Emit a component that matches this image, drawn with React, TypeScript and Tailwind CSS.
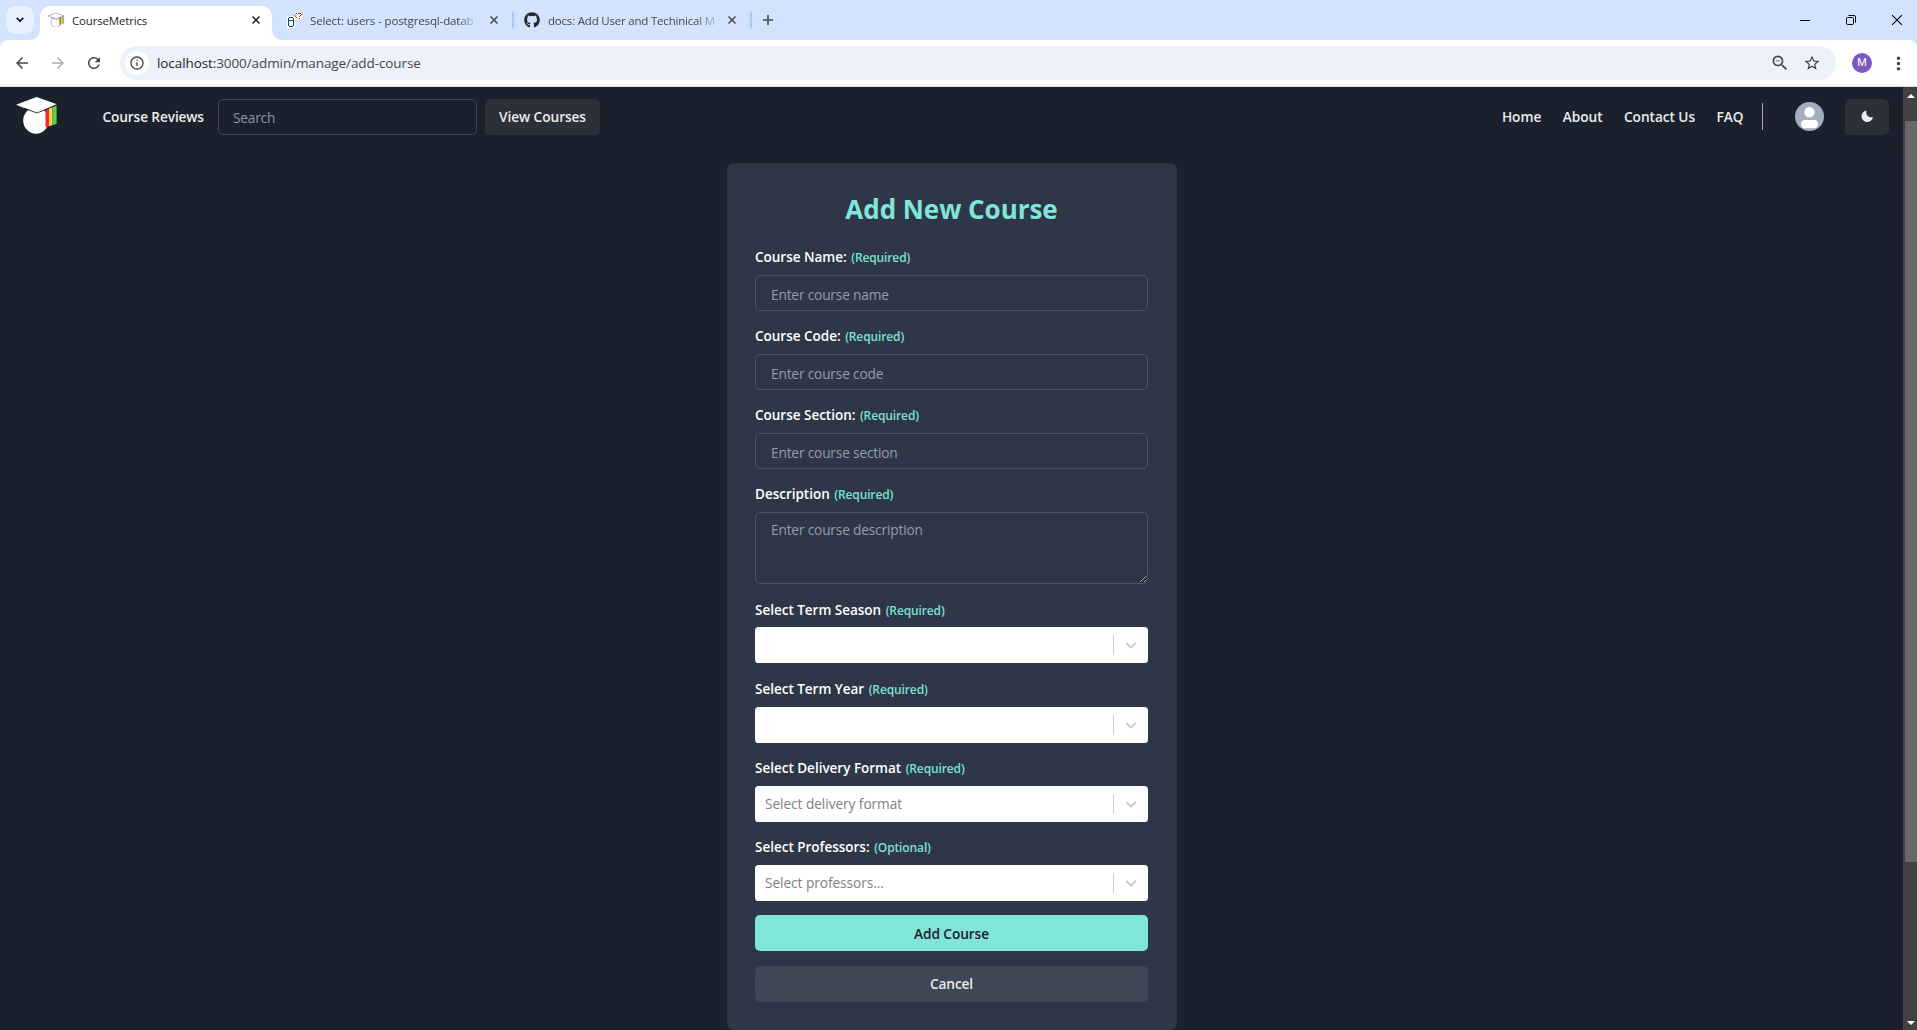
import type { ReactNode } from "react";
import {
  MdArrowBack,
  MdArrowForward,
  MdInfoOutline,
  MdMoreVert,
  MdRefresh,
  MdStarBorder,
  MdZoomOut,
} from "react-icons/md";
import { FaGithub } from "react-icons/fa";

function CapLogo({ className, outline }: { className: string; outline?: boolean }) {
  const line = outline ? "#8a8a8a" : "#1a202c";
  return (
    <svg viewBox="0 0 41 37" className={className}>
      <ellipse cx="20" cy="23.5" rx="12.8" ry="13.2" fill="#fff" stroke={outline ? line : "none"} strokeWidth="1.6" />
      <path d="M29.5 12.5 33 11.5V29.5L29.5 30.5z" fill="#f02b2b" />
      <path d="M33 11 36.3 10V28.2L33 29.3z" fill="#f9d44c" />
      <path d="M36.3 10 40.6 8.8V27L36.3 28.2z" fill="#5fcf4f" />
      <path d="M0 7.8 20.5 0 41 7.2 21 16z" fill="#fff" stroke={outline ? line : "none"} strokeWidth="1.6" />
      <path d="M8 11.2 21 16 41 7.6" fill="none" stroke={line} strokeWidth={outline ? 1.6 : 0.9} />
    </svg>
  );
}

function DatabaseIcon() {
  return (
    <svg viewBox="0 0 16 16" className="size-4 shrink-0" shapeRendering="crispEdges">
      <path d="M0 4h8v12H0zM7 1h8v6H7z" fill="#fff" />
      <path d="M2 5h4v1H2zM1 6h1v8H1zM6 6h1v8H6zM2 8h4v1H2zM2 14h4v1H2z" fill="#0f4c63" />
      <path
        d="M9 1h1v1H9zM8 2h1v1H8zM7 3h1v1H7zM8 4h1v1H8zM9 5h1v1H9zM11 1h3v1h-3zM14 2h1v1h-1zM13 3h1v1h-1zM12 4h1v1h-1zM12 6h1v1h-1z"
        fill="#e11d1d"
      />
    </svg>
  );
}

function CloseGlyph({ className }: { className: string }) {
  return (
    <svg viewBox="0 0 8 8" className={`size-2 shrink-0 ${className}`}>
      <path d="M.5.5l7 7M7.5.5l-7 7" stroke="currentColor" strokeWidth="1.5" fill="none" />
    </svg>
  );
}

function TabStrip() {
  return (
    <div className="flex h-10 items-center bg-[#d3e3fd]">
      <div className="ml-1.5 flex size-7 items-center justify-center rounded-[10px] bg-[#e9f0fd]">
        <svg viewBox="0 0 8 6" className="h-1.5 w-2">
          <path d="M.7.8 4 4.2 7.3.8" fill="none" stroke="#1f1f1f" strokeWidth="1.7" />
        </svg>
      </div>
      <div className="relative ml-1.5 flex h-[34px] w-[232px] items-center self-end rounded-t-[10px] bg-white pb-1.5 text-[#1f1f1f]">
        <svg viewBox="0 0 10 10" className="absolute -left-2.5 bottom-0 size-2.5">
          <path d="M10 0v10H0A10 10 0 0 0 10 0z" fill="#fff" />
        </svg>
        <svg viewBox="0 0 10 10" className="absolute -right-2.5 bottom-0 size-2.5">
          <path d="M0 0v10h10A10 10 0 0 1 0 0z" fill="#fff" />
        </svg>
        <CapLogo className="ml-2 h-[14.5px] w-4" outline />
        <span className="ml-2 flex-1 pt-0.5 text-[11.5px] tracking-[-0.18px]">CourseMetrics</span>
        <CloseGlyph className="mr-3" />
      </div>
      <div className="ml-[15px] flex items-center text-[#43474e]">
        <DatabaseIcon />
        <span className="ml-[7px] w-[168px] pt-0.5 text-[11.5px] tracking-[-0.13px] whitespace-nowrap [mask-image:linear-gradient(to_right,#000_148px,transparent_168px)]">
          Select: users - postgresql-datab
        </span>
        <CloseGlyph className="ml-3" />
      </div>
      <div className="ml-3.5 h-4 w-0.5 rounded-full bg-[#a8c7fa]" />
      <div className="ml-2.5 flex items-center text-[#43474e]">
        <FaGithub className="size-4 text-[#24292f]" />
        <span className="ml-2 w-[168px] pt-0.5 text-[11.5px] tracking-[-0.2px] whitespace-nowrap [mask-image:linear-gradient(to_right,#000_148px,transparent_172px)]">
          docs: Add User and Techinical M
        </span>
        <CloseGlyph className="ml-3" />
      </div>
      <div className="ml-3.5 h-4 w-0.5 rounded-full bg-[#a8c7fa]" />
      <svg viewBox="0 0 10 10" className="ml-[11px] size-2.5">
        <path d="M5 0v10M0 5h10" stroke="#43474e" strokeWidth="1.6" />
      </svg>
      <div className="mr-[15px] ml-auto flex items-center gap-9 text-black">
        <svg viewBox="0 0 10 10" className="size-2.5">
          <path d="M0 5.5h10" stroke="currentColor" />
        </svg>
        <svg viewBox="0 0 10 10" className="size-2.5" fill="none" stroke="currentColor">
          <rect x=".5" y="2.5" width="7" height="7" rx="1.2" />
          <path d="M2.5.5H8A1.5 1.5 0 0 1 9.500 2v5.500" />
        </svg>
        <svg viewBox="0 0 10 10" className="size-2.5">
          <path d="M0 0l10 10M10 0L0 10" stroke="currentColor" strokeWidth="1.1" />
        </svg>
      </div>
    </div>
  );
}

function Toolbar() {
  return (
    <div className="bg-[#d3e3fd]">
      <div className="flex h-[47px] items-center rounded-t-lg border-b border-[#dcdfe4] bg-white text-[#474747]">
        <MdArrowBack className="ml-[13px] size-[18px]" />
        <MdArrowForward className="ml-[18px] size-[18px] text-[#aaacae]" />
        <MdRefresh className="ml-[18px] size-[18px]" />
        <div className="ml-[17px] flex h-[34px] w-[1716px] items-center rounded-full bg-[#ecf1fa]">
          <div className="ml-[5px] flex size-6 items-center justify-center rounded-full bg-white">
            <MdInfoOutline className="size-4" />
          </div>
          <div className="ml-2 flex-1 text-[13.5px] tracking-[-0.09px] text-[#474747]">
            <span className="text-[#1f1f1f]">localhost:</span>3000/admin/manage/add-course
          </div>
          <MdZoomOut className="size-5" />
          <MdStarBorder className="mr-[15px] ml-[13px] size-[18px]" />
        </div>
        <div className="ml-4 flex size-5 items-center justify-center rounded-full bg-[#7e57c2] pt-px font-[Roboto] text-[11px] text-white">
          M
        </div>
        <MdMoreVert className="ml-[15.5px] size-[21px]" />
      </div>
    </div>
  );
}

function NavBar() {
  return (
    <header className="flex h-[60px] items-center border-b border-[#171923] text-[13.7px] font-semibold tracking-[-0.13px] text-[#ebecec]">
      <CapLogo className="-mt-0.5 ml-4 h-[37px] w-[41px]" />
      <span className="ml-[45.500px] w-[115.500px] pt-0.5 whitespace-nowrap">Course Reviews</span>
      <input
        placeholder="Search"
        className="h-9 w-[259px] rounded-[5px] border border-[#3f444e] bg-transparent px-3.5 pt-0.5 font-normal tracking-[-0.2px] outline-none placeholder:text-[#8f96a1]"
      />
      <button className="ml-2 h-9 w-[115px] rounded-[5px] bg-[#2c303b] pt-0.5 tracking-[-0.07px]">View Courses</button>
      <nav className="ml-auto flex gap-[21.500px] pt-0.5 tracking-[-0.06px] whitespace-nowrap">
        <span>Home</span>
        <span>About</span>
        <span>Contact Us</span>
        <span>FAQ</span>
      </nav>
      <div className="ml-[18.500px] h-[27px] w-px bg-[#a5a8ad]" />
      <svg viewBox="0 0 29 29" className="ml-8 size-[29px]">
        <circle cx="14.5" cy="14.5" r="14.500" fill="#a0aec0" />
        <circle cx="14.500" cy="10.300" r="5.200" fill="#fff" />
        <rect x="6" y="18" width="17" height="8.300" rx="4" fill="#fff" />
      </svg>
      <button className="mr-3.5 ml-[21px] flex h-9 w-11 items-center justify-center rounded-[5px] bg-[#2c303b]">
        <svg viewBox="0 0 24 24" className="size-[12.6px]">
          <path
            fill="currentColor"
            d="M21.4,13.7C20.6,13.9,19.8,14,19,14c-5,0-9-4-9-9c0-0.8,0.1-1.6,0.3-2.4c0.1-0.3,0-0.7-0.3-1 c-0.3-0.3-0.6-0.4-1-0.3C4.3,2.7,1,7.1,1,12c0,6.1,4.9,11,11,11c4.9,0,9.3-3.3,10.6-8.1c0.1-0.3,0-0.7-0.3-1 C22.1,13.7,21.7,13.6,21.4,13.7z"
          />
        </svg>
      </button>
    </header>
  );
}

function Field({ label, hint = "(Required)", className = "mt-[15px] gap-2", children }: {
  label: string;
  hint?: string;
  className?: string;
  children: ReactNode;
}) {
  return (
    <div className={`flex flex-col ${className}`}>
      <label className="h-5 text-[13.5px] leading-5 font-semibold tracking-[-0.01px] whitespace-nowrap text-white">
        {label}
        <span className="ml-[4.500px] text-[12px] font-semibold tracking-[-0.12px] text-[#7be0d2]">{hint}</span>
      </label>
      {children}
    </div>
  );
}

const control =
  "w-full rounded-[5px] border border-[#4c5564] bg-transparent px-[15px] text-[13.7px] tracking-[-0.17px] text-white outline-none placeholder:text-[#959daa]";

function SelectBox({ placeholder = "" }: { placeholder?: string }) {
  return (
    <div className="flex h-9 items-center rounded-[3.6px] bg-white">
      <span className="ml-2.5 flex-1 text-[13.7px] tracking-[-0.06px] text-[#808080]">{placeholder}</span>
      <span className="h-5 w-px bg-[#cccccc]" />
      <svg viewBox="0 0 20 20" className="mr-2 ml-2 size-[18px] fill-[#cccccc]">
        <path d="M4.516 7.548c0.436-0.446 1.043-0.481 1.576 0l3.908 3.747 3.908-3.747c0.533-0.481 1.141-0.446 1.574 0 0.436 0.445 0.408 1.197 0 1.615-0.406 0.418-4.695 4.502-4.695 4.502-0.217 0.223-0.502 0.335-0.787 0.335s-0.57-0.112-0.789-0.335c0 0-4.287-4.084-4.695-4.502s-0.436-1.17 0-1.615z" />
      </svg>
    </div>
  );
}

function CourseForm() {
  return (
    <form className="mt-4 ml-[727px] h-[867px] w-[450px] rounded-[7px] bg-[#2d3748] pt-7 pr-[29px] pl-7">
      <h1 className="text-center text-[26px] leading-9 font-bold tracking-[-0.05px] text-[#81e6d9]">Add New Course</h1>
      <Field label="Course Name:" className="mt-5 gap-2">
        <input placeholder="Enter course name" className={`h-9 pt-0.5 ${control}`} />
      </Field>
      <Field label="Course Code:">
        <input placeholder="Enter course code" className={`h-9 pt-0.5 ${control}`} />
      </Field>
      <Field label="Course Section:">
        <input placeholder="Enter course section" className={`h-9 pt-0.5 ${control}`} />
      </Field>
      <Field label="Description">
        <textarea placeholder="Enter course description" className={`block h-[72px] resize-y pt-[7px] leading-5 ${control}`} />
      </Field>
      <Field label="Select Term Season" className="mt-4 gap-[7px]">
        <SelectBox />
      </Field>
      <Field label="Select Term Year" className="mt-4 gap-2">
        <SelectBox />
      </Field>
      <Field label="Select Delivery Format">
        <SelectBox placeholder="Select delivery format" />
      </Field>
      <Field label="Select Professors:" hint="(Optional)">
        <SelectBox placeholder="Select professors..." />
      </Field>
      <button type="button" className="mt-3.5 block h-9 w-full rounded-[5px] bg-[#81e6d9] pt-0.5 text-[13.7px] font-semibold tracking-[-0.08px] text-[#1a202c]">
        Add Course
      </button>
      <button type="button" className="mt-[15px] block h-9 w-full rounded-[5px] bg-[#3e4756] text-[13.7px] font-semibold tracking-[-0.13px] text-[#ebecec]">
        Cancel
      </button>
    </form>
  );
}

function Scrollbar() {
  return (
    <div className="flex w-3.5 flex-col items-end bg-[#424242]">
      <svg viewBox="0 0 8 4" className="mt-[7px] mr-0.5 h-1 w-2 shrink-0">
        <path d="M4 0 8 4H0z" fill="#fff" />
      </svg>
      <div className="mt-[23px] h-[741px] w-3 shrink-0 bg-[#686868]" />
      <svg viewBox="0 0 8 4" className="mt-auto mr-0.5 mb-[5px] h-1 w-2 shrink-0">
        <path d="M0 0h8L4 4z" fill="#fff" />
      </svg>
    </div>
  );
}

export default function App() {
  return (
    <div className="flex h-[1030px] w-[1917px] flex-col overflow-hidden bg-[#1a202c] font-['Open_Sans','Noto_Sans',sans-serif]">
      <TabStrip />
      <Toolbar />
      <div className="flex min-h-0 flex-1">
        <main className="min-w-0 flex-1">
          <NavBar />
          <CourseForm />
        </main>
        <Scrollbar />
      </div>
    </div>
  );
}
